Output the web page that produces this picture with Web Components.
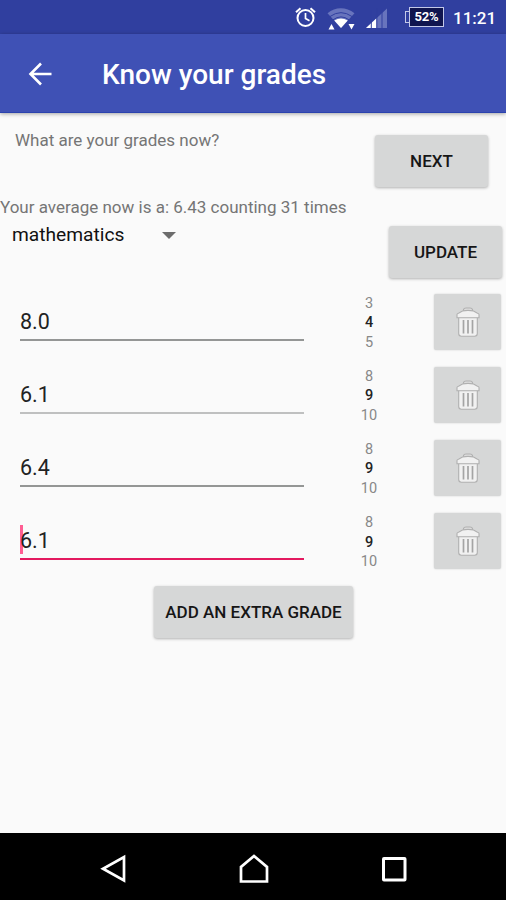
<!DOCTYPE html>
<html lang="en">
<head>
<meta charset="utf-8">
<title>Know your grades</title>
<style>
  html, body {
    margin: 0;
    height: 100%;
  }
  body {
    font-family: Roboto, sans-serif;
    background: #fafafa;
    overflow: hidden;
  }
</style>
</head>
<body>

<grades-app></grades-app>

<template id="status-bar">
  <style>
    :host {
      display: flex;
      align-items: flex-start;
      height: 34px;
      flex: none;
      box-sizing: border-box;
      padding-left: 294px;
      background: #303f9f;
      color: #fff;
    }
    svg { display: block; flex: none; }
    .battery {
      display: flex;
      align-items: center;
      margin: 7px 0 0 17px;
    }
    .battery::before {
      content: "";
      width: 3px;
      height: 10px;
      border: 1.500px solid #c3c8e8;
      border-right: 0;
    }
    .level {
      width: 35px;
      height: 20px;
      border: 1.500px solid #c3c8e8;
      box-sizing: border-box;
      background: #10154f;
      font: 700 13px/18px Roboto, sans-serif;
      letter-spacing: -.2px;
      text-align: center;
      white-space: nowrap;
    }
    .time {
      margin: 8px 0 0 9px;
      font-size: 17px;
      line-height: 20px;
      font-weight: 500;
    }
  </style>
  <svg width="94" height="34" viewBox="0 0 94 34">
    <!-- alarm -->
    <g fill="none" stroke="#fff" stroke-width="2">
      <circle cx="11.5" cy="18" r="8"/>
      <path d="M11.5 13v5.5l4 2.3" stroke-width="1.7"/>
      <path d="M2 12.3l4.5-4M21 12.3l-4.5-4"/>
    </g>
    <!-- wifi -->
    <path d="M33.500 13.300C41.500 6.700 52 6.700 60.500 13.300L47 28z" fill="#6874bd"/>
    <path d="M36 16.500Q47 8.800 58 16.500M39 19.800Q47 14 55 19.800" fill="none" stroke="#303f9f" stroke-width="1"/>
    <path d="M40.300 20.600Q47 16.500 53.700 20.600L47 28z" fill="#fff"/>
    <path d="M34.500 29.500l3-5.500 3 5.500zM54.500 24h6l-3 5.500z" fill="#fff"/>
    <!-- signal -->
    <path d="M72 28L93 8.500V28z" fill="#6874bd"/>
    <path d="M72 28L82.500 18.200V28z" fill="#fff"/>
    <path d="M77.300 10v18M82.800 8v20M88 8v20" stroke="#303f9f" stroke-width="1"/>
  </svg>
  <div class="battery"><div class="level">52%</div></div>
  <div class="time">11:21</div>
</template>

<template id="app-bar">
  <style>
    :host {
      display: flex;
      align-items: center;
      height: 79px;
      flex: none;
      box-sizing: border-box;
      padding: 2px 0 0 28px;
      background: #3f51b5;
      border-bottom: 1px solid #2b43ae;
      color: #fff;
      box-shadow: 0 1px 4px rgba(0, 0, 0, .35);
    }
    svg { display: block; }
    h1 {
      margin: 2px 0 0 50px;
      font-size: 28px;
      letter-spacing: 0;
      font-weight: 500;
      line-height: 34px;
      white-space: nowrap;
    }
  </style>
  <svg width="24" height="24" viewBox="0 0 24 24" fill="none" stroke="#fff" stroke-width="2.600">
    <path d="M23.500 12H2.500M13 1.500L2.500 12L13 22.500"/>
  </svg>
  <h1><slot></slot></h1>
</template>

<template id="raised-button">
  <style>
    :host {
      display: flex;
      align-items: center;
      justify-content: center;
      flex: none;
      box-sizing: border-box;
      width: 113px;
      height: 52px;
      border-radius: 3px;
      background: #d6d7d7;
      box-shadow: 0 1px 3px rgba(0, 0, 0, .3);
      color: #161616;
      font-size: 17px;
      font-weight: 500;
      line-height: 20px;
      white-space: nowrap;
    }
  </style>
  <slot></slot>
</template>

<template id="subject-spinner">
  <style>
    :host {
      display: flex;
      align-items: center;
      justify-content: space-between;
      width: 164px;
      height: 24px;
      margin-top: 6px;
      font-size: 19.200px;
      color: #111;
    }
    i {
      border: 7px solid transparent;
      border-top-color: #6c6c6c;
      border-bottom: 0;
    }
  </style>
  <slot></slot><i></i>
</template>

<template id="grade-row">
  <style>
    :host {
      display: grid;
      grid-template-columns: 284px 130px 67px;
      align-items: start;
      height: 56px;
      padding-left: 20px;
    }
    .field {
      display: flex;
      align-items: center;
      height: 47px;
      padding-top: 11px;
      box-sizing: border-box;
      border-bottom: 2px solid var(--line, #949695);
      color: #222;
      font-size: 21.500px;
      line-height: 26px;
    }
    .caret {
      width: 3px;
      height: 29px;
      margin: -3px -3px 0 0;
      background: #ff5e93;
      display: none;
    }
    :host([focused]) .caret { display: block; }
    :host([focused]) .field { border-color: #e3195f; }
    .picker {
      display: flex;
      flex-direction: column;
      align-items: center;
      font-size: 14.500px;
      line-height: 19.500px;
      color: #888;
    }
    .picker b {
      font-weight: 500;
      color: #222;
    }
    .delete {
      display: flex;
      align-items: center;
      justify-content: center;
      height: 56px;
      background: #d6d7d7;
      border-radius: 2px;
      box-shadow: 0 0 2px rgba(0, 0, 0, .18);
    }
  </style>
  <div class="field"><span class="caret"></span><span class="value"></span></div>
  <div class="picker"><span></span><b></b><span></span></div>
  <div class="delete">
    <svg width="26" height="32" viewBox="0 0 26 32" fill="#f1f1f1" stroke="#b0b0b0" stroke-width="1.100">
      <path d="M8.500 5V3.500Q9 2 11 2h4q2 0 2.500 1.500V5" fill="#ddd"/>
      <path d="M3.700 11h18.600v16.500q0 2.700-2.700 2.700H6.400q-2.700 0-2.700-2.700z"/>
      <path d="M2 11.800V8.500Q2 7.500 3.500 7.200L7.500 5Q13 3.800 18.500 5l4 2.200Q24 7.500 24 8.500v3.300z"/>
      <path d="M8.500 14v13.500M13 14v13.500M17.500 14v13.500" stroke="#a4a4a4" stroke-width="1.700"/>
    </svg>
  </div>
</template>

<template id="nav-bar">
  <style>
    :host {
      display: flex;
      align-items: center;
      justify-content: space-between;
      height: 67px;
      flex: none;
      box-sizing: border-box;
      padding: 4px 98px 0 99px;
      background: #000;
    }
    .home { margin-right: 4px; }
  </style>
  <svg width="30" height="30" viewBox="0 0 30 30" fill="none" stroke="#fff" stroke-width="2.700"><path d="M25 3v23.500L4 14.700z"/></svg>
  <svg class="home" width="30" height="30" viewBox="0 0 30 30" fill="none" stroke="#fff" stroke-width="2.700"><path d="M2 27.500V13L15 2L28 13V27.500z"/></svg>
  <svg width="26" height="26" viewBox="0 0 26 26" fill="none" stroke="#fff" stroke-width="3"><rect x="1.500" y="2.500" width="21.500" height="21.500" rx=".5"/></svg>
</template>

<template id="grades-app">
  <style>
    :host {
      display: flex;
      flex-direction: column;
      width: 506px;
      height: 900px;
    }
    main {
      flex: 1;
      padding-top: 17px;
      color: #757575;
      font-size: 17px;
      line-height: 20px;
    }
    .question, .subject {
      display: flex;
      justify-content: space-between;
    }
    .question {
      height: 67px;
      padding: 0 18px 0 15px;
    }
    .question raised-button { margin-top: 5px; }
    .average { white-space: nowrap; }
    .subject {
      height: 76.500px;
      padding: 0 4px 0 12px;
      box-sizing: border-box;
    }
    .subject raised-button { margin-top: 9px; }
    .rows {
      display: flex;
      flex-direction: column;
      gap: 17.200px;
    }
    grade-row:nth-child(2) { --line: #bfc0c0; }
    .add {
      width: 199px;
      margin: 17px auto 0 154px;
    }
  </style>
  <status-bar></status-bar>
  <app-bar>Know your grades</app-bar>
  <main>
    <div class="question">
      <span>What are your grades now?</span>
      <raised-button>NEXT</raised-button>
    </div>
    <div class="average">Your average now is a: 6.43 counting 31 times</div>
    <div class="subject">
      <subject-spinner>mathematics</subject-spinner>
      <raised-button>UPDATE</raised-button>
    </div>
    <div class="rows">
      <grade-row value="8.0" weight="4"></grade-row>
      <grade-row value="6.1" weight="9"></grade-row>
      <grade-row value="6.4" weight="9"></grade-row>
      <grade-row value="6.1" weight="9" focused></grade-row>
    </div>
    <raised-button class="add">ADD AN EXTRA GRADE</raised-button>
  </main>
  <nav-bar></nav-bar>
</template>

<script>
  // Base class: clones the template named after the tag into the shadow root
  class TemplateElement extends HTMLElement {
    constructor() {
      super();
      const template = document.getElementById(this.localName);
      this.attachShadow({ mode: 'open' });
      this.shadowRoot.appendChild(document.importNode(template.content, true));
    }
  }

  class GradeRow extends TemplateElement {
    connectedCallback() {
      const weight = Number(this.getAttribute('weight'));
      const cells = this.shadowRoot.querySelectorAll('.picker > *');
      this.shadowRoot.querySelector('.value').textContent = this.getAttribute('value');
      // previous, current and next weight
      cells.forEach((cell, i) => cell.textContent = weight + i - 1);
    }
  }

  customElements.define('status-bar', class StatusBar extends TemplateElement {});
  customElements.define('app-bar', class AppBar extends TemplateElement {});
  customElements.define('raised-button', class RaisedButton extends TemplateElement {});
  customElements.define('subject-spinner', class SubjectSpinner extends TemplateElement {});
  customElements.define('grade-row', GradeRow);
  customElements.define('nav-bar', class NavBar extends TemplateElement {});
  customElements.define('grades-app', class GradesApp extends TemplateElement {});
</script>
</body>
</html>
